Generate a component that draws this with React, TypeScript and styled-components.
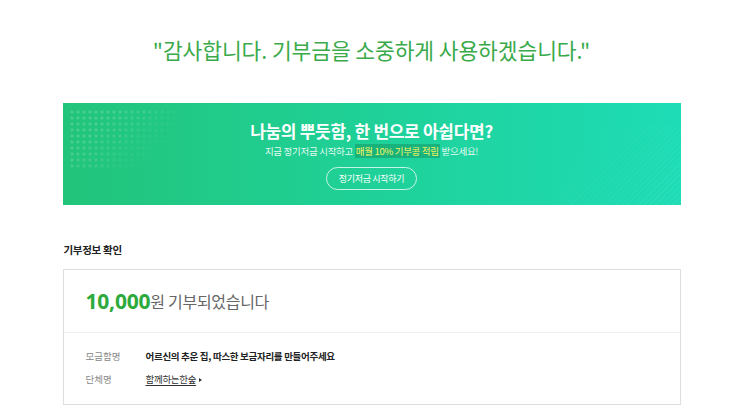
import styled, { createGlobalStyle } from "styled-components";

const GlobalStyle = createGlobalStyle`
    html, body {
        margin: 0;
        padding: 0;
        background: #ffffff;
    }
    body {
        font-family: "Noto Sans CJK KR", "Noto Sans", sans-serif;
        color: #222;
    }
`;

const Page = styled.main`
    width: 618px;
    margin: 0 auto;
    padding-top: 34px;
`;

const Thanks = styled.h1`
    margin: 0;
    text-align: center;
    font-size: 21.5px;
    font-weight: 400;
    letter-spacing: -0.1px;
    line-height: 32px;
    color: #3aaa4a;
`;

const Banner = styled.section`
    position: relative;
    overflow: hidden;
    margin-top: 37px;
    height: 102px;
    display: flex;
    flex-direction: column;
    align-items: center;
    background: linear-gradient(90deg, #22c47a 0%, #1fd198 50%, #1edcb6 100%);

    &::before {
        content: "";
        position: absolute;
        left: 6px;
        top: 6px;
        width: 110px;
        height: 60px;
        background-image: radial-gradient(circle, rgba(255, 255, 255, 0.16) 1.4px, transparent 1.8px);
        background-size: 6px 6px;
        -webkit-mask-image: linear-gradient(135deg, #000 30%, transparent 80%);
        mask-image: linear-gradient(135deg, #000 30%, transparent 80%);
    }

    &::after {
        content: "";
        position: absolute;
        right: 0;
        bottom: 0;
        width: 150px;
        height: 80px;
        background: repeating-linear-gradient(
            135deg,
            rgba(255, 255, 255, 0.06) 0 1px,
            transparent 1px 4px
        );
        -webkit-mask-image: linear-gradient(315deg, #000 20%, transparent 75%);
        mask-image: linear-gradient(315deg, #000 20%, transparent 75%);
    }
`;

const BannerTitle = styled.h2`
    margin: 16px 0 0;
    font-size: 17px;
    font-weight: 700;
    letter-spacing: -0.3px;
    line-height: 24px;
    color: #ffffff;
`;

const BannerSub = styled.p`
    margin: 1px 0 0;
    font-size: 9.5px;
    letter-spacing: -0.3px;
    line-height: 14px;
    color: rgba(255, 255, 255, 0.9);
`;

const Mark = styled.span`
    padding: 0 1px;
    color: #f6f45e;
    background: rgba(12, 120, 70, 0.35);
`;

const PillButton = styled.button`
    margin-top: 9px;
    height: 23px;
    padding: 0 12px;
    border: 1px solid rgba(255, 255, 255, 0.75);
    border-radius: 12px;
    background: transparent;
    font-family: inherit;
    font-size: 9px;
    letter-spacing: -0.3px;
    color: #ffffff;
    cursor: pointer;
`;

const SectionTitle = styled.h3`
    margin: 37px 0 0 1px;
    font-size: 10.5px;
    font-weight: 700;
    letter-spacing: -0.3px;
    line-height: 16px;
    color: #222;
`;

const Card = styled.section`
    margin-top: 11px;
    border: 1px solid #dedede;
    background: #fff;
`;

const AmountRow = styled.div`
    height: 62px;
    display: flex;
    align-items: center;
    padding-left: 22px;
    border-bottom: 1px solid #efefef;
`;

const Amount = styled.strong`
    font-family: "Noto Sans", "Noto Sans CJK KR", sans-serif;
    font-size: 21px;
    font-weight: 700;
    color: #2eaa3c;
    letter-spacing: -0.2px;
`;

const AmountText = styled.span`
    margin-left: 0;
    font-size: 16px;
    letter-spacing: -0.3px;
    color: #666;
`;

const InfoList = styled.dl`
    margin: 0;
    padding: 15px 22px 17px;
    display: grid;
    grid-template-columns: 60px 1fr;
    row-gap: 7px;
    align-items: center;
`;

const Label = styled.dt`
    font-size: 9.5px;
    line-height: 16px;
    color: #888;
`;

const Value = styled.dd`
    margin: 0;
    font-size: 9.5px;
    line-height: 16px;
    letter-spacing: -0.3px;
    font-weight: 700;
    color: #222;
`;

const OrgLink = styled.a`
    font-weight: 400;
    color: #333;
    text-decoration: underline;
    text-underline-offset: 2px;

    &::after {
        content: "";
        display: inline-block;
        margin-left: 3px;
        border-left: 3px solid #333;
        border-top: 2.5px solid transparent;
        border-bottom: 2.5px solid transparent;
        vertical-align: 1px;
    }
`;

const App = () => {
    return (
        <>
            <GlobalStyle />
            <Page>
                <Thanks>"감사합니다. 기부금을 소중하게 사용하겠습니다."</Thanks>

                <Banner>
                    <BannerTitle>나눔의 뿌듯함, 한 번으로 아쉽다면?</BannerTitle>
                    <BannerSub>
                        지금 정기저금 시작하고 <Mark>매월 10% 기부콩 적립</Mark> 받으세요!
                    </BannerSub>
                    <PillButton>정기저금 시작하기</PillButton>
                </Banner>

                <SectionTitle>기부정보 확인</SectionTitle>
                <Card>
                    <AmountRow>
                        <Amount>10,000</Amount>
                        <AmountText>원 기부되었습니다</AmountText>
                    </AmountRow>
                    <InfoList>
                        <Label>모금함명</Label>
                        <Value>어르신의 추운 집, 따스한 보금자리를 만들어주세요</Value>
                        <Label>단체명</Label>
                        <Value>
                            <OrgLink href="#">함께하는한숲</OrgLink>
                        </Value>
                    </InfoList>
                </Card>
            </Page>
        </>
    );
};

export default App;
